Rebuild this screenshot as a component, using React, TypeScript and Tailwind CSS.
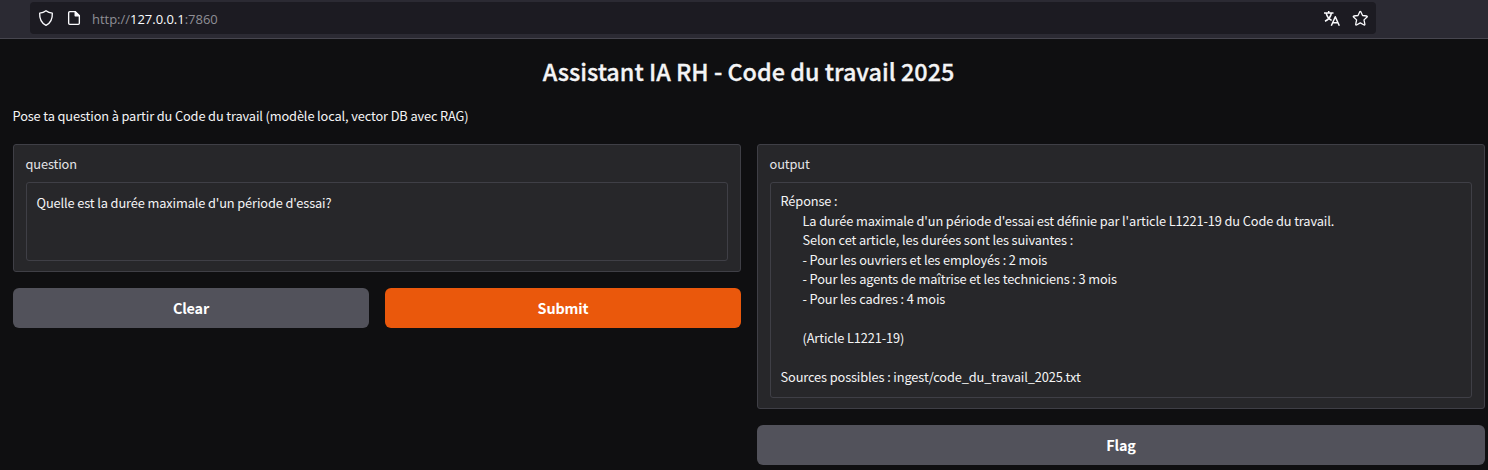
import type { ReactNode } from "react";

function ShieldIcon() {
  return (
    <svg width="16" height="18" viewBox="0 0 16 18" fill="none" stroke="#fbfbfe" strokeWidth="1.35" strokeLinejoin="round">
      <path d="M8 1.7 C9.8 3.1 11.8 3.9 14.3 4.2 C14.6 9.6 12.6 14 8 16.3 C3.4 14 1.4 9.6 1.7 4.2 C4.2 3.9 6.2 3.1 8 1.7 Z" />
    </svg>
  );
}

function PageIcon() {
  return (
    <svg width="14" height="16" viewBox="0 0 14 16" fill="none" stroke="#fbfbfe" strokeWidth="1.35" strokeLinejoin="round">
      <path d="M8.2 1.65 H2.8 Q1.65 1.65 1.65 2.8 V13.2 Q1.65 14.35 2.8 14.35 H11.2 Q12.35 14.35 12.35 13.2 V5.8 Z" />
      <path d="M8.2 1.65 V5.8 H12.35 Z" fill="#fbfbfe" />
    </svg>
  );
}

function TranslateIcon() {
  return (
    <svg width="18" height="17" viewBox="0 0 18 17" fill="none" stroke="#fbfbfe" strokeWidth="1.5">
      <path d="M1 3 H10.5 M5.7 1 V3 M8.4 3 C7.8 6.5 5.6 9.6 2 11.2 M3.2 3.2 C4 6.5 5.8 8.8 8.6 10.4" />
      <path d="M8.3 15.8 L12.3 6.8 L16.3 15.8 M9.7 12.8 H14.9" strokeLinejoin="round" />
    </svg>
  );
}

function StarIcon() {
  return (
    <svg width="17" height="17" viewBox="0 0 17 17" fill="none" stroke="#fbfbfe" strokeWidth="1.3" strokeLinejoin="round">
      <path d="M7.8 1.7 Q8.3 0.9 8.8 1.7 L10.6 5.5 L14.8 6 Q15.7 6.3 15.1 7 L12 9.9 L12.9 14.4 Q12.8 15.2 12.1 15 L8.3 12.9 L4.5 15 Q3.8 15.2 3.7 14.4 L4.6 9.9 L1.5 7 Q0.9 6.3 1.8 6 L6 5.5 Z" />
    </svg>
  );
}

function AddressBar() {
  return (
    <header className="h-[39px] border-b border-[#47464f] bg-[#2b2a33] pt-[2px] pl-[30px]">
      <div className="flex h-8 w-[1346px] items-center rounded bg-[#1c1b22] pr-[7px] pl-2">
        <ShieldIcon />
        <div className="ml-[13px]">
          <PageIcon />
        </div>
        <p className="ml-[11px] pt-[2px] font-['Open_Sans',sans-serif] text-[13px] leading-4 tracking-[-0.02px] text-[#8f8f96]">
          http://<span className="text-[#fbfbfe]">127.0.0.1</span>:7860
        </p>
        <div className="ml-auto flex items-center gap-[11px]">
          <TranslateIcon />
          <StarIcon />
        </div>
      </div>
    </header>
  );
}

function Field({ label, children }: { label: string; children: ReactNode }) {
  return (
    <section className="rounded-[3px] border border-[#3f3f46] bg-[#27272a] px-3 pt-[9px] pb-[10px]">
      <h2 className="-ml-[0.5px] h-7 text-[12.8px] leading-5 tracking-[-0.12px] text-[#e4e4e7]">{label}</h2>
      {children}
    </section>
  );
}

const answer = `Réponse :
        La durée maximale d'un période d'essai est définie par l'article L1221-19 du Code du travail.
        Selon cet article, les durées sont les suivantes :
        - Pour les ouvriers et les employés : 2 mois
        - Pour les agents de maîtrise et les techniciens : 3 mois
        - Pour les cadres : 4 mois

        (Article L1221-19)

Sources possibles : ingest/code_du_travail_2025.txt`;

export default function App() {
  return (
    <div className="h-[470px] overflow-hidden bg-[#0f0f11] font-['Noto_Sans_CJK_SC',sans-serif] text-[#f4f4f5]">
      <AddressBar />
      <main className="pr-[3px] pl-[13px]">
        <h1 className="pt-[16px] pr-px text-center text-[23.4px] leading-8 font-medium [-webkit-text-stroke:0.3px_#f4f4f5]">
          Assistant IA RH - Code du travail 2025
        </h1>
        <p className="mt-[19px] -ml-[0.5px] h-[38px] text-[12.8px] leading-5 tracking-[-0.125px]">
          Pose ta question à partir du Code du travail (modèle local, vector DB avec RAG)
        </p>
        <div className="grid grid-cols-2 items-start gap-4">
          <div>
            <Field label="question">
              <div className="h-[79px] rounded-[3px] border border-[#3f3f46] px-[9.5px] pt-[10px] text-[12.8px] leading-5 tracking-[-0.12px]">
                Quelle est la durée maximale d'un période d'essai?
              </div>
            </Field>
            <div className="mt-4 grid grid-cols-2 gap-4">
              <button className="h-10 rounded-md bg-[#52525b] text-[14.4px] leading-5 font-bold tracking-[-0.15px] text-white">Clear</button>
              <button className="h-10 rounded-md bg-[#ea580c] text-[14.4px] leading-5 font-bold tracking-[-0.15px] text-white">Submit</button>
            </div>
          </div>
          <div>
            <Field label="output">
              <div className="h-[216px] rounded-[3px] border border-[#3f3f46] px-[9.5px] pt-[8px] text-[12.8px] leading-[19.55px] tracking-[-0.12px] whitespace-pre">
                {answer}
              </div>
            </Field>
            <button className="mt-4 h-10 w-full rounded-md bg-[#52525b] text-[14.4px] leading-5 font-bold tracking-[-0.15px] text-white">Flag</button>
          </div>
        </div>
      </main>
    </div>
  );
}
